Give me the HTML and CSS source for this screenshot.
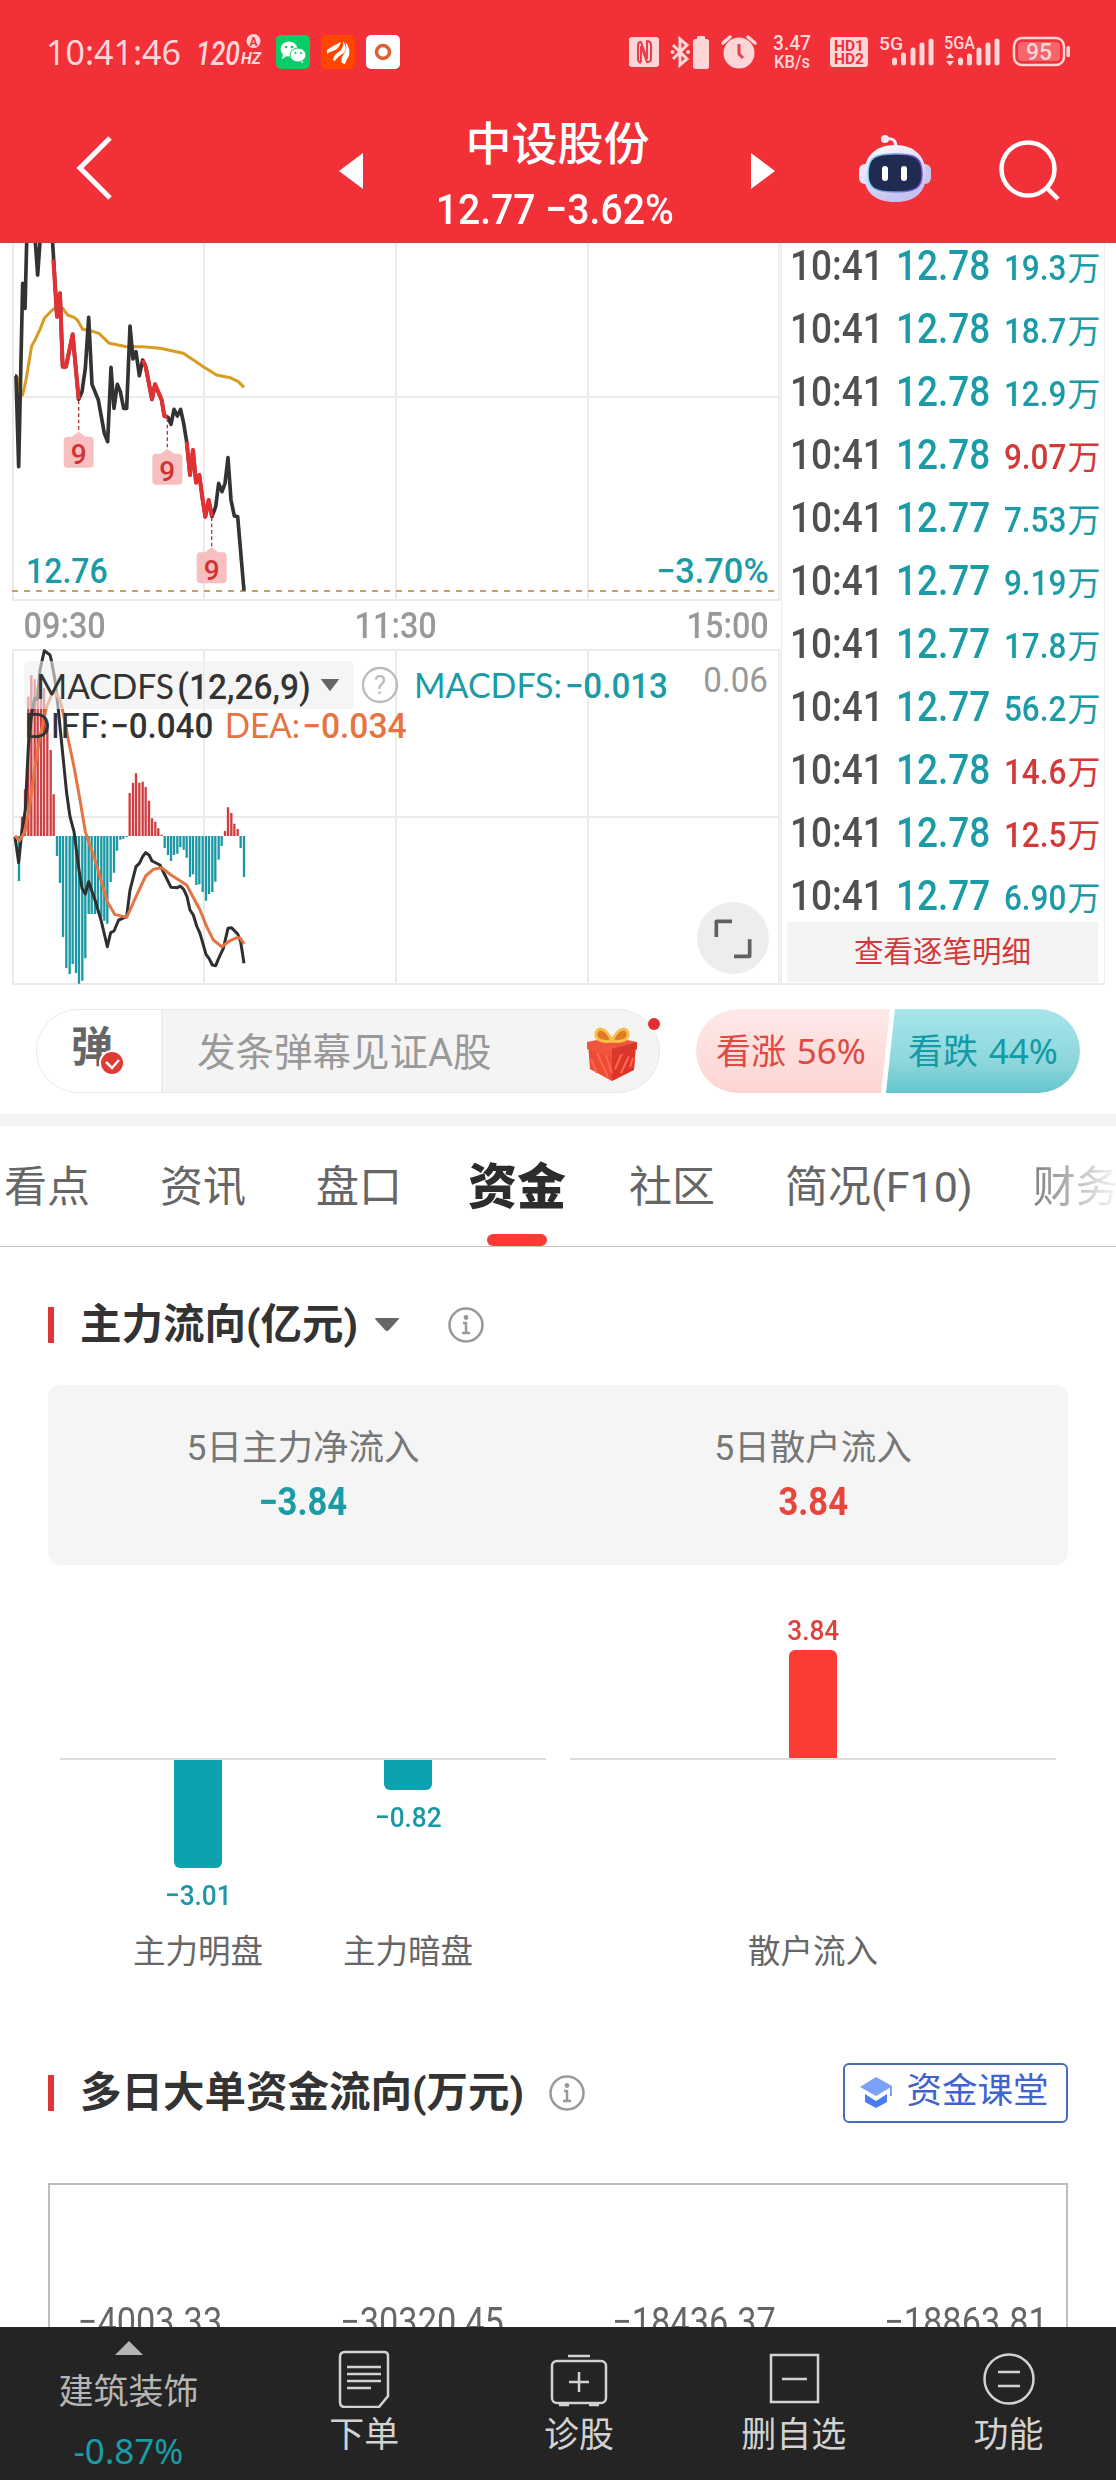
FILE: index.html
```html
<!DOCTYPE html>
<html lang="zh-CN">
<head>
  <meta charset="UTF-8" />
  <meta name="viewport" content="width=device-width, initial-scale=1.0"/>
  <title>中设股份</title>
  <link rel="stylesheet" href="styles.css">
</head>
<body>
  <header class="header">
    <div class="status">
      <svg width="354" height="40" viewBox="47 33 354 40">
        <text class="clock" x="46" y="65" textLength="135" lengthAdjust="spacingAndGlyphs">10:41:46</text>
        <text class="hz" x="196" y="65" font-size="34" textLength="44" lengthAdjust="spacingAndGlyphs">120</text>
        <text class="hz hz-unit" x="241" y="64" font-size="16" textLength="20" lengthAdjust="spacingAndGlyphs">HZ</text>
        <circle cx="253.500" cy="41" r="7" fill="#ffd6d8"/>
        <text x="253.500" y="45.500" font-size="12" font-weight="700" text-anchor="middle" fill="#f13038">A</text>
        <rect x="276" y="35" width="34" height="34" rx="5" fill="#08cd67"/>
        <ellipse cx="289" cy="49" rx="8.5" ry="7.5" fill="#fff"/>
        <path d="M283 54l-1 5 5-3zM303 59l0 4-5-2z" fill="#fff"/>
        <ellipse cx="298" cy="55" rx="8" ry="7" fill="#fff" stroke="#08cd67"/>
        <g fill="#08cd67"><circle cx="286" cy="47" r="1.3"/><circle cx="292" cy="47" r="1.3"/><circle cx="295.500" cy="53" r="1.1"/><circle cx="301" cy="53" r="1.1"/></g>
        <rect x="321" y="35" width="34" height="34" rx="5" fill="#ff4600"/>
        <path d="M327 50Q334 45 341 42Q339 49 333 51Q329 52 327 54zM333 60Q334 54 340 51Q344 47 343 41Q348 48 344 53Q338 56 335 61zM342 63Q340 58 344 54Q348 48 345 41Q351 49 349 56Q346 60 345 64z" fill="#fff"/>
        <rect x="366" y="35" width="34" height="34" rx="5" fill="#fff"/>
        <circle cx="383" cy="52" r="6.500" fill="none" stroke="#dc6034" stroke-width="3.500"/>
      </svg>
      <svg width="442" height="40" viewBox="629 33 442 40" fill="#ffd6d8">
        <rect x="629" y="37" width="30" height="30" rx="3"/>
        <path d="M641 63q-3-1-3-4V45q0-3 3-3l6 17V42M646 41q5 0 5 4v14q0 3-4 3l-6-16v16" fill="none" stroke="#e8404a" stroke-width="2"/>
        <path d="M673 45l14 14-7 6V39l7 6-14 14" fill="none" stroke="#ffd6d8" stroke-width="3"/>
        <circle cx="672.500" cy="52" r="2"/><circle cx="688" cy="52" r="2"/>
        <rect x="693" y="39" width="16" height="30" rx="2.500"/><rect x="697" y="36" width="8" height="5" rx="1"/>
        <circle cx="739" cy="53" r="15.500"/>
        <path d="M723 43l7-6M755 43l-7-6" stroke="#ffd6d8" stroke-width="3.500" stroke-linecap="round"/>
        <path d="M739 44v10l4 4" fill="none" stroke="#e8404a" stroke-width="3"/>
        <text x="773" y="50" font-size="21" font-weight="500" textLength="38" lengthAdjust="spacingAndGlyphs">3.47</text>
        <text x="774" y="68" font-size="19" font-weight="500" textLength="36" lengthAdjust="spacingAndGlyphs">KB/s</text>
        <rect x="830" y="37" width="38" height="30" rx="3"/>
        <text class="hd" x="834" y="50.500" textLength="30" lengthAdjust="spacingAndGlyphs">HD1</text>
        <text class="hd" x="834" y="64" textLength="30" lengthAdjust="spacingAndGlyphs">HD2</text>
        <text x="879" y="50" font-size="19" font-weight="500" textLength="24" lengthAdjust="spacingAndGlyphs">5G</text>
        <path class="signal" d="M894.500 63V60M903.500 63V55M913 63V50M922 63V45M931 63V41"/>
        <text x="944" y="49" font-size="18" font-weight="500" textLength="31" lengthAdjust="spacingAndGlyphs">5GA</text>
        <path d="M946 58h8l-4-5zM946 61h8l-4 5z"/>
        <path class="signal" d="M960.500 63V60M969.500 63V56M979 63V50M988 63V45M997 63V41"/>
        <rect x="1014" y="38" width="50" height="27" rx="8" fill="none" stroke="#ffd6d8" stroke-width="2.500"/>
        <rect x="1018" y="42" width="42" height="19" rx="4" fill="#f6656c"/>
        <rect x="1066.500" y="46" width="3.500" height="11" rx="1.500"/>
        <text x="1026" y="60" font-size="24" font-weight="500" textLength="26" lengthAdjust="spacingAndGlyphs">95</text>
      </svg>
    </div>
    <div class="titlebar">
      <svg class="back" width="40" height="70" viewBox="0 0 40 70"><path d="M35 5L5 35l30 30" fill="none" stroke="#fff" stroke-width="5"/></svg>
      <svg class="prev" width="24" height="36"><path d="M24 0v36L0 18z" fill="#fff"/></svg>
      <div class="stock">
        <div class="stock-name">中设股份</div>
        <div class="stock-price"><span class="num">12.77 −3.62%</span></div>
      </div>
      <svg class="next" width="24" height="36"><path d="M0 0v36l24-18z" fill="#fff"/></svg>
      <svg class="robot" width="72" height="70" viewBox="0 0 72 70">
        <defs>
          <linearGradient id="head" x1="0" y1="0" x2="0.400" y2="1"><stop offset="0" stop-color="#fff"/><stop offset="1" stop-color="#c6c2f2"/></linearGradient>
          <linearGradient id="rim" x1="0" y1="0" x2="1" y2="0"><stop offset="0" stop-color="#7ed3f4"/><stop offset="1" stop-color="#7646d8"/></linearGradient>
        </defs>
        <path d="M27 5q10-2 10 8" fill="none" stroke="#f3e9fb" stroke-width="3"/>
        <circle cx="26" cy="5" r="4" fill="#f6e6f4"/>
        <rect x="0" y="30" width="14" height="20" rx="6" fill="#e8e6fb"/><rect x="58" y="30" width="14" height="20" rx="6" fill="#c9c4f0"/>
        <path d="M36 11c20 0 31 12 31 30 0 17-11 27-31 27S5 58 5 41c0-18 11-30 31-30z" fill="url(#head)"/>
        <path d="M36 20c20 0 27 3 27 20 0 14-6 18-27 18S9 54 9 40c0-17 7-20 27-20z" fill="#202b52" stroke="url(#rim)" stroke-width="1.500"/>
        <rect x="23" y="32" width="6" height="15" rx="3" fill="#fff"/><rect x="42" y="32" width="6" height="15" rx="3" fill="#fff"/>
      </svg>
      <svg class="search" width="64" height="64" viewBox="0 0 64 64"><circle cx="29" cy="30" r="26.500" fill="none" stroke="#fff" stroke-width="4.500"/><path d="M48 49l11 11" stroke="#fff" stroke-width="4.500"/></svg>
    </div>
  </header>

  <section class="quote">
    <div class="charts">
      <svg class="price-chart" width="781" height="358" viewBox="0 9 2343 1074">
        <path class="grid" d="M39 0V1080H2338V0M612 0V1080M1188 0V1080M1764 0V1080M39 471H2338"/>
        <path d="M36 1053H2330" fill="none" stroke="#c2a06a" stroke-width="6" stroke-dasharray="18 18"/>
        <path d="M52 410L62 465 68 465 78 420 95 318 105 300 120 268 133 235 160 207 188 205 203 225 222 232 232 240 248 268 270 272 297 280 328 310 380 320 430 320 480 325 550 340 610 380 650 405 690 413 715 425 732 442" class="line" stroke="#d99c22" stroke-width="9"/>
        <path d="M45 408L48 408 56 680 68 130 75 205 81 -30 100 -40 106 5 113 105 121 -10 150 -60 158 10 161 60 171 230 180 160 188 380 198 380 218 283 236 478 246 455 256 385 266 232 276 433 295 480 313 580 323 605 333 382 342 505 352 433 361 455 371 505 380 505 390 258 399 357 408 335 418 407 428 360 437 380 456 478 465 433 485 480 493 528 504 532 513 553 522 508 532 528 542 508 551 550 560 605 570 705 579 630 588 728 598 705 608 780 616 830 626 780 636 830 647 800 656 730 666 755 675 730 684 653 693 780 703 828 713 830 732 1052" class="line" stroke="#333" stroke-width="11"/>
        <path d="M160 58L171 230 180 160 188 380 198 380 218 283 236 478M428 360L437 380 456 478 465 433 485 480 493 528 502 530M560 605L570 705 579 630 588 728 598 705 608 780 616 830 626 780 636 830" class="line" stroke="#e23133" stroke-width="12"/>
        <path d="M236 482V572M502 535V624M635 832V920" stroke="#b33a3a" stroke-width="4" stroke-dasharray="11 8"/>
        <g class="pin" transform="translate(191 575)"><path d="M45 0l20 15h13q12 0 12 12v69q0 12-12 12H12q-12 0-12-12V27Q0 15 12 15h13z"/><text x="45" y="97">9</text></g>
        <g class="pin" transform="translate(457 626)"><path d="M45 0l20 15h13q12 0 12 12v69q0 12-12 12H12q-12 0-12-12V27Q0 15 12 15h13z"/><text x="45" y="97">9</text></g>
        <g class="pin" transform="translate(590 922)"><path d="M45 0l20 15h13q12 0 12 12v69q0 12-12 12H12q-12 0-12-12V27Q0 15 12 15h13z"/><text x="45" y="97">9</text></g>
        <g class="chart-text down">
          <text x="78" y="1029" textLength="245" lengthAdjust="spacingAndGlyphs">12.76</text>
          <text x="1968" y="1029" textLength="338" lengthAdjust="spacingAndGlyphs">−3.70%</text>
        </g>
      </svg>
      <div class="time-axis"><span class="num">09:30</span><span class="num">11:30</span><span class="num">15:00</span></div>
      <svg class="macd-chart" width="781" height="337" viewBox="0 57 2343 1011">
        <path class="grid" d="M39 60H2338V1062H39zM612 60V1062M1188 60V1062M1764 60V1062M39 561H2338"/>
        <path d="M66 618V560M75 618V478M85 618V200M94 618V136M104 618V148M113 618V170M123 618V150M132 618V175M142 618V283M152 618V360M161 618V493M389 618V489M399 618V458M408 618V430M418 618V458M428 618V455M437 618V471M447 618V512M456 618V565M466 618V575M475 618V595M485 618V614M675 618V603M684 618V532M694 618V549M703 618V581M713 618V597" stroke="#cf3f41" stroke-width="7"/>
        <path d="M57 618V753M171 618V678M180 618V759M189 618V921M199 618V1014M209 618V1032M218 618V1002M228 618V1029M237 618V1061M247 618V1052M256 618V985M266 618V852M275 618V852M285 618V852M294 618V850M304 618V862M313 618V872M322 618V881M332 618V756M342 618V728M351 618V662M361 618V629M370 618V626M380 618V621M494 618V654M504 618V675M513 618V693M522 618V675M532 618V671M541 618V652M551 618V659M560 618V683M570 618V741M579 618V733M589 618V765M598 618V763M608 618V786M618 618V812M627 618V792M637 618V786M646 618V755M656 618V689M665 618V648M722 618V654M732 618V741" stroke="#1a98a3" stroke-width="7"/>
        <path d="M45 620L56 698 66 600 76 540 85 350 95 250 104 205 112 208 120 120 133 62 150 75 155 95 165 150 175 240 188 370 200 490 210 560 222 605 237 720 246 775 256 792 266 755 285 810 303 870 322 950 332 908 342 903 356 870 380 860 390 780 408 710 418 700 428 680 437 668 447 675 456 693 480 705 513 772 532 773 541 768 551 778 561 800 570 840 580 855 590 888 600 910 618 973 627 985 637 1005 647 1007 656 985 670 955 684 895 694 893 713 912 722 935 732 1000" class="line" stroke="#2f2f2f" stroke-width="9"/>
        <path d="M45 617L58 632 75 605 90 520 105 410 120 320 140 230 155 195 165 185 180 210 190 250 205 330 222 410 240 510 256 605 285 690 322 815 344 853 380 862 408 800 437 738 460 718 485 713 513 735 560 765 600 840 620 890 640 930 665 950 690 932 713 922 722 926 732 942" class="line" stroke="#e67443" stroke-width="9"/>
        <rect x="72" y="93" width="990" height="144" rx="14" fill="#efefef" fill-opacity=".6"/>
        <path d="M962 147h56l-28 37z" fill="#666"/>
        <circle cx="1140" cy="165" r="51" fill="none" stroke="#bbb" stroke-width="7"/>
        <text x="1140" y="192" font-size="78" text-anchor="middle" fill="#bbb">?</text>
        <g class="chart-text">
          <text class="label" x="108" y="207" textLength="414" lengthAdjust="spacingAndGlyphs">MACDFS</text>
          <text x="532" y="207" textLength="400" lengthAdjust="spacingAndGlyphs">(12,26,9)</text>
          <text class="label" x="72" y="323" textLength="252" lengthAdjust="spacingAndGlyphs">DIFF:</text>
          <text x="330" y="323" textLength="310" lengthAdjust="spacingAndGlyphs">−0.040</text>
        </g>
        <g class="chart-text dea">
          <text class="label" x="674" y="323" textLength="226" lengthAdjust="spacingAndGlyphs">DEA:</text>
          <text x="906" y="323" textLength="314" lengthAdjust="spacingAndGlyphs">−0.034</text>
        </g>
        <g class="chart-text down">
          <text class="label" x="1242" y="204" textLength="444" lengthAdjust="spacingAndGlyphs">MACDFS:</text>
          <text x="1694" y="204" textLength="310" lengthAdjust="spacingAndGlyphs">−0.013</text>
        </g>
        <text class="scale" x="2110" y="187" textLength="194" lengthAdjust="spacingAndGlyphs">0.06</text>
        <circle cx="2199" cy="924" r="108" fill="#ededed"/>
        <path d="M2149 921v-47h47M2202 979h47v-51" fill="none" stroke="#606060" stroke-width="11" stroke-linejoin="round"/>
      </svg>
    </div>
    <div class="ticks">
      <div class="tick"><span class="num">10:41</span><span class="num deal">12.78</span><span class="vol down"><i class="num">19.3</i>万</span></div>
      <div class="tick"><span class="num">10:41</span><span class="num deal">12.78</span><span class="vol down"><i class="num">18.7</i>万</span></div>
      <div class="tick"><span class="num">10:41</span><span class="num deal">12.78</span><span class="vol down"><i class="num">12.9</i>万</span></div>
      <div class="tick"><span class="num">10:41</span><span class="num deal">12.78</span><span class="vol up"><i class="num">9.07</i>万</span></div>
      <div class="tick"><span class="num">10:41</span><span class="num deal">12.77</span><span class="vol down"><i class="num">7.53</i>万</span></div>
      <div class="tick"><span class="num">10:41</span><span class="num deal">12.77</span><span class="vol down"><i class="num">9.19</i>万</span></div>
      <div class="tick"><span class="num">10:41</span><span class="num deal">12.77</span><span class="vol down"><i class="num">17.8</i>万</span></div>
      <div class="tick"><span class="num">10:41</span><span class="num deal">12.77</span><span class="vol down"><i class="num">56.2</i>万</span></div>
      <div class="tick"><span class="num">10:41</span><span class="num deal">12.78</span><span class="vol up"><i class="num">14.6</i>万</span></div>
      <div class="tick"><span class="num">10:41</span><span class="num deal">12.78</span><span class="vol up"><i class="num">12.5</i>万</span></div>
      <div class="tick"><span class="num">10:41</span><span class="num deal">12.77</span><span class="vol down"><i class="num">6.90</i>万</span></div>
      <div class="detail">查看逐笔明细</div>
    </div>
  </section>

  <section class="social">
    <div class="danmu">
      <div class="danmu-toggle">
        <span>弹</span>
        <svg class="check" width="26" height="26" viewBox="0 0 26 26"><circle cx="13" cy="13" r="12" fill="#e13a32" stroke="#fff" stroke-width="2"/><path d="M7 12l6 6 7-8" fill="none" stroke="#fff" stroke-width="2.500"/></svg>
      </div>
      <div class="danmu-input">发条弹幕见证A股</div>
      <svg class="gift" width="50" height="54" viewBox="0 0 50 54">
        <path d="M1 16l24-4 24 4-2 26-22 12L3 42z" fill="#ef4a34"/>
        <path d="M25 24l24-8-2 27-22 11z" fill="#e0342b"/>
        <path d="M4 32l6 14M10 26l11 24M18 26l7 20M34 46l8-17M28 42l8-18M43 40l3-9" stroke="#f9694e" stroke-width="2"/>
        <path d="M0 15l25-5 25 5v7l-25 8L0 22z" fill="#f0553d"/><path d="M25 22l25-7v7l-25 8z" fill="#d8382c"/>
        <path d="M25 14C18-2 8 0 9 9q2 7 16 5zM25 14C32-2 42 0 41 9q-2 7-16 5z" fill="#e07a26" stroke="#f7c04b" stroke-width="3"/>
      </svg>
      <i class="dot"></i>
    </div>
    <div class="vote">
      <div class="vote-up">看涨 <span>56%</span></div>
      <div class="vote-down">看跌 <span>44%</span></div>
    </div>
  </section>

  <nav class="tabs">
    <span>看点</span>
    <span>资讯</span>
    <span>盘口</span>
    <span class="active">资金</span>
    <span>社区</span>
    <span>简况(F10)</span>
    <span class="fade">财务</span>
  </nav>

  <section class="flow">
    <div class="section-title">
      <h2>主力流向(亿元)</h2>
      <svg class="caret" width="24" height="14"><path d="M1 0h22q2 0 0 2l-9 10q-2 2-4 0L1 2q-2-2 0-2z" fill="#666"/></svg>
      <svg width="36" height="36" viewBox="0 0 36 36" fill="none" stroke="#999" stroke-width="2.500"><circle cx="18" cy="18" r="16.500"/><path d="M15 16h3v10M14 26h8"/><circle cx="18" cy="10.500" r="1.200"/></svg>
    </div>
    <div class="summary">
      <div><p>5日主力净流入</p><strong class="num down">−3.84</strong></div>
      <div><p>5日散户流入</p><strong class="num up">3.84</strong></div>
    </div>
    <div class="bars">
      <div class="bar-group">
        <div class="bar-col"><div class="above"></div><div class="below"><div class="bar" style="height:108px"></div><span class="num">−3.01</span></div><p>主力明盘</p></div>
        <div class="bar-col"><div class="above"></div><div class="below"><div class="bar" style="height:30px"></div><span class="num">−0.82</span></div><p>主力暗盘</p></div>
      </div>
      <div class="bar-group single">
        <div class="bar-col"><div class="above"><span class="num">3.84</span><div class="bar" style="height:108px"></div></div><div class="below"></div><p>散户流入</p></div>
      </div>
    </div>
  </section>

  <section class="daily">
    <div class="section-title">
      <h2>多日大单资金流向(万元)</h2>
      <svg width="36" height="36" viewBox="0 0 36 36" fill="none" stroke="#999" stroke-width="2.500"><circle cx="18" cy="18" r="16.500"/><path d="M15 16h3v10M14 26h8"/><circle cx="18" cy="10.500" r="1.200"/></svg>
      <div class="course">
        <svg width="33" height="32" viewBox="0 0 33 32"><path d="M16 0l16 9v9l-1-8-15 9L0 10z" fill="#7da1f8"/><path d="M5 17l11 7 11-7v8l-11 6-11-6z" fill="#4c7cf4"/><path d="M31 10v9" stroke="#7da1f8" stroke-width="2"/></svg>
        <span>资金课堂</span>
      </div>
    </div>
    <div class="daily-box">
      <span class="num">−4003.33</span><span class="num">−30320.45</span><span class="num">−18436.37</span><span class="num">−18863.81</span>
    </div>
  </section>

  <footer class="toolbar">
    <div class="sector">
      <svg width="28" height="14"><path d="M14 0l14 14H0z" fill="#b5b5b5"/></svg>
      <span>建筑装饰</span>
      <span class="sector-chg">-0.87%</span>
    </div>
    <div class="tool">
      <svg width="60" height="60" viewBox="0 0 60 60"><path d="M11 4h39q4 0 4 4v40l-9 11H11q-5 0-5-5V9q0-5 5-5z"/><path d="M13 19h34M13 26h34M13 33h34M13 40h24"/></svg>
      <span>下单</span>
    </div>
    <div class="tool">
      <svg width="60" height="60" viewBox="0 0 60 60"><rect x="3" y="13" width="54" height="42" rx="5"/><path d="M19 8h22M20 34h20M30 24v20M10 57h10M40 57h10"/></svg>
      <span>诊股</span>
    </div>
    <div class="tool">
      <svg width="60" height="60" viewBox="0 0 60 60"><rect x="7" y="7" width="47" height="47"/><path d="M18 31h25"/></svg>
      <span>删自选</span>
    </div>
    <div class="tool">
      <svg width="60" height="60" viewBox="0 0 60 60"><circle cx="30" cy="31" r="24.500"/><path d="M19 24h22M19 38h22"/></svg>
      <span>功能</span>
    </div>
  </footer>
</body>
</html>
```

FILE: styles.css
```css
* { box-sizing: border-box; }
body {
  margin: 0;
  width: 1116px;
  height: 2480px;
  overflow: hidden;
  display: flex;
  flex-direction: column;
  background: #fff;
  color: #333;
  font-family: Roboto, "Noto Sans CJK SC", sans-serif;
}
svg { display: block; flex: none; }
svg text { font-family: Roboto, "Noto Sans CJK SC", sans-serif; }
p, h2 { margin: 0; }

/* narrow figures */
.num {
  display: inline-block;
  font-family: Roboto, sans-serif;
  font-style: normal;
  font-weight: 500;
  transform: scaleX(0.88);
  white-space: nowrap;
}
.up { color: #d23a3a; }
.down { color: #1a9ba6; }

/* header */
.header {
  height: 243px;
  flex: none;
  background: #f13038;
  border-bottom: 1px solid #c93c41;
  color: #fff;
}
.status {
  display: flex;
  justify-content: space-between;
  padding: 33px 45px 0 47px;
}
.status svg { overflow: visible; }
.status .clock { font-family: "Noto Sans", sans-serif; font-size: 35px; fill: #ffd6d8; }
.status .hz { font-style: italic; font-weight: 500; fill: #ffd6d8; }
.status .hz-unit { font-weight: 700; }
.status .hd { font-size: 15px; font-weight: 700; fill: #f13038; }
.signal { stroke: #ffd6d8; stroke-width: 5; stroke-linecap: round; }
.titlebar {
  display: flex;
  align-items: flex-start;
  padding: 0 53px 0 75px;
  height: 169px;
}
.back { margin-top: 60px; }
.prev { margin: 80px 0 0 224px; }
.next { margin: 80px 0 0 1px; }
.robot { margin: 61px 0 0 84px; }
.search { margin: 66px 0 0 68px; }
.stock { width: 390px; text-align: center; padding-top: 41px; }
.stock-name { font-size: 46px; line-height: 60px; font-weight: 500; padding-left: 2px; }
.stock-price { font-size: 43px; line-height: 50px; margin: 10px -20px 0 -20px; padding-right: 4px; }
.stock-price .num { transform: scaleX(0.91); }

/* charts and ticks */
.quote { display: flex; height: 744px; flex: none; }
.charts { width: 781px; }
.grid { fill: none; stroke: #eaeaea; stroke-width: 6; }
.line { fill: none; stroke-linejoin: round; }
.pin path { fill: #f7bfc0; }
.pin text { font-size: 84px; font-weight: 500; text-anchor: middle; fill: #cf3333; }
.chart-text text { font-size: 106px; font-weight: 500; fill: #333; }
.chart-text .label { font-family: Lato, sans-serif; font-weight: 400; }
.chart-text.down text { fill: #1a9ba6; }
.chart-text.dea text { fill: #e67443; }
.scale { font-size: 106px; fill: #999; }
.time-axis {
  display: flex;
  justify-content: space-between;
  height: 48px;
  padding: 0 8px 0 19px;
  font-size: 36px;
  line-height: 50px;
  color: #999;
}
.time-axis .num { transform: scaleX(0.9); }
.ticks {
  width: 324px;
  height: 742px;
  padding: 0 6px 0 5px;
  overflow: hidden;
  border: solid #ececec;
  border-width: 0 1px 2px 1px;
}
.tick {
  display: grid;
  grid-template-columns: 106px 101px 1fr;
  align-items: baseline;
  height: 63px;
  padding-left: 3px;
  font-size: 42px;
  line-height: 63px;
  color: #505050;
}
.tick:first-child { margin-top: -9px; }
.tick .num { transform-origin: left; }
.tick .deal { color: #1a9ba6; }
.vol { display: flex; justify-content: flex-end; font-size: 33px; padding-right: 8px; }
.tick .vol .num { font-size: 35px; transform: scaleX(0.9); transform-origin: right; margin-right: 1px; }
.detail {
  height: 60px;
  margin-top: -5px;
  background: #f4f4f4;
  color: #d23a3a;
  font-size: 29.5px;
  line-height: 61px;
  text-align: center;
}

/* danmu bar */
.social {
  display: flex;
  justify-content: space-between;
  height: 139px;
  flex: none;
  padding: 22px 36px 0;
  border-bottom: 12px solid #f4f4f4;
}
.danmu {
  position: relative;
  display: flex;
  align-items: center;
  width: 624px;
  height: 84px;
  border: 1px solid #e8e8e8;
  border-radius: 42px;
  background: #f4f4f4;
}
.danmu-toggle {
  position: relative;
  width: 126px;
  height: 82px;
  padding-left: 34px;
  border-right: 2px solid #ebebeb;
  border-radius: 41px 0 0 41px;
  background: #fff;
  font-size: 42px;
  line-height: 75px;
  font-weight: 700;
  color: #666;
}
.check { position: absolute; left: 62px; top: 40px; }
.danmu-input { flex: 1; padding-left: 34px; font-size: 38.5px; margin-top: -4px; color: #999; }
.gift { margin: 6px 22px 0 0; }
.dot {
  position: absolute;
  right: -1px;
  top: 8px;
  width: 12px;
  height: 12px;
  border-radius: 50%;
  background: #e42f31;
}
.vote {
  display: flex;
  width: 384px;
  height: 84px;
  border-radius: 42px;
  overflow: hidden;
  font-size: 35px;
  line-height: 83px;
}
.vote div { white-space: nowrap; }
.vote span { display: inline-block; font-family: "Noto Sans", sans-serif; margin-left: 2px; }
.vote-up {
  width: 194px;
  padding-left: 20px;
  background: linear-gradient(#fee9e8, #fcd5d2);
  color: #e04a44;
  clip-path: polygon(0 0, 100% 0, 185px 100%, 0 100%);
}
.vote-down {
  width: 194px;
  margin-left: -4px;
  padding-left: 22px;
  background: linear-gradient(#a6e5ea, #8cd6db 65%, #64c5ce);
  color: #149aa5;
  clip-path: polygon(9px 0, 100% 0, 100% 100%, 0 100%);
}

/* tabs */
.tabs {
  display: flex;
  height: 121px;
  flex: none;
  overflow: hidden;
  border-bottom: 1px solid #c4c4c4;
  padding-left: 4px;
  gap: 70px;
  font-size: 43px;
  line-height: 123px;
  white-space: nowrap;
  color: #666;
}
.tabs .active {
  display: flex;
  flex-direction: column;
  align-items: center;
  margin: 0 -7px 0 -4px;
  font-size: 49px;
  font-weight: 900;
  color: #2c2c2c;
}
.tabs .active::after {
  content: "";
  width: 60px;
  height: 12px;
  margin-top: -15px;
  border-radius: 6px;
  background: #fb3c34;
  flex: none;
}
.tabs .fade {
  margin-left: -10px;
  background: linear-gradient(90deg, #808080, #f4f4f4 82px);
  background-clip: text;
  -webkit-background-clip: text;
  color: transparent;
}

/* capital flow */
.section-title { display: flex; align-items: center; height: 60px; }
.section-title h2 {
  padding-left: 26px;
  font-size: 41.5px;
  line-height: 36px;
  font-weight: 700;
  border-left: 6px solid #dd3636;
}
.section-title .caret { margin: 0 49px 0 17px; }
.flow { flex: none; height: 816px; padding: 48px 48px 0; }
.summary {
  display: grid;
  grid-template-columns: 1fr 1fr;
  height: 180px;
  margin-top: 30px;
  padding-top: 42px;
  border-radius: 12px;
  background: #f5f5f5;
  text-align: center;
}
.summary p { font-size: 35.5px; line-height: 43px; color: #777; }
.summary .num { font-size: 38px; line-height: 50px; margin-top: 7px; font-weight: 700; transform: scaleX(0.91); }
.summary .up { color: #e8453c; }
.bars { display: flex; justify-content: space-between; padding: 0 12px; margin-top: 42px; }
.bar-group { position: relative; display: flex; width: 486px; padding: 0 33px; }
.bar-group::before {
  content: "";
  position: absolute;
  left: 0;
  right: 0;
  top: 151px;
  height: 2px;
  background: #dcdcdc;
}
.bar-col { width: 210px; font-size: 28.5px; line-height: 32px; text-align: center; }
.single { justify-content: center; }
.above { height: 151px; display: flex; flex-direction: column; align-items: center; justify-content: flex-end; color: #e0403a; }
.below { height: 170px; padding-top: 2px; display: flex; flex-direction: column; align-items: center; color: #1a98a3; }
.bar-col .num { transform: scaleX(0.92); }
.bar { width: 48px; flex: none; }
.above .bar { margin-top: 3px; border-radius: 6px 6px 0 0; background: #fb3c34; }
.below .bar { margin-bottom: 12px; border-radius: 0 0 6px 6px; background: #0ca2b0; }
.bar-col p { font-size: 32.5px; line-height: 48px; color: #666; }

/* daily orders */
.daily { flex: none; height: 264px; padding: 0 48px; overflow: hidden; }
.daily .section-title > svg { margin-left: 25px; }
.course {
  display: flex;
  align-items: center;
  justify-content: center;
  gap: 13px;
  width: 225px;
  height: 60px;
  margin-left: auto;
  padding-right: 2px;
  border: 2px solid #4a6bb8;
  border-radius: 6px;
  font-size: 35.5px;
  line-height: 52px;
  color: #4063cf;
}
.course span { margin-top: -5px; }
.daily-box {
  display: flex;
  justify-content: center;
  height: 300px;
  margin-top: 60px;
  padding-top: 116px;
  border: 2px solid #bebebe;
  font-size: 39px;
  line-height: 42px;
  text-align: center;
  color: #666;
}
.daily-box .num { flex: none; width: 272px; font-weight: 400; }

/* bottom toolbar */
.toolbar {
  display: flex;
  height: 153px;
  flex: none;
  background: #242424;
  color: #d2d2d2;
  font-size: 35px;
}
.sector { width: 257px; display: flex; flex-direction: column; align-items: center; padding-top: 14px; line-height: 46px; color: #b5b5b5; }
.sector span { margin-top: 15px; }
.sector .sector-chg { margin-top: 12px; color: #1a9ba6; font-family: "Noto Sans", sans-serif; }
.tool { flex: 1; display: flex; flex-direction: column; align-items: center; padding-top: 21px; line-height: 46px; }
.tool span { margin-top: 5px; }
.tool svg { fill: none; stroke: #d2d2d2; stroke-width: 2.5; }
```
